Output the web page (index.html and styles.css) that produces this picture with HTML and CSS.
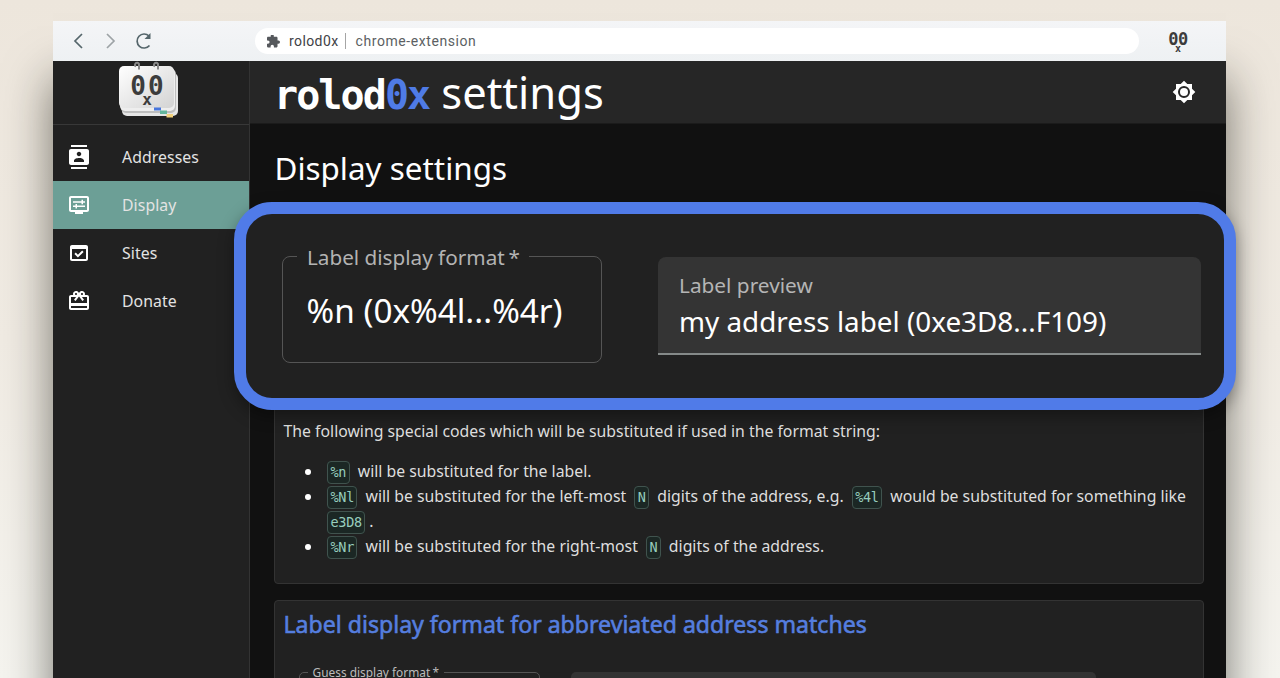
FILE: index.html
```html
<!DOCTYPE html>
<html lang="en">
<head>
<meta charset="utf-8">
<title>rolod0x settings</title>
<link rel="stylesheet" href="styles.css">
</head>
<body>
<div class="window">
  <div class="toolbar">
    <svg class="nav" width="84" height="20" viewBox="0 0 84 20" fill="none" stroke-width="1.7">
      <path d="M11 3 4 10l7 7" stroke="#55666b"/>
      <path d="M36 3l7 7-7 7" stroke="#9da3a6"/>
      <path d="M78.500 14.500A7 7 0 1 1 78 5" stroke="#55666b"/>
      <path d="M79.500 2v6h-6z" fill="#55666b"/>
    </svg>
    <div class="omnibox">
      <svg width="13" height="13" viewBox="2 2 21 21" fill="#55585c"><path d="M20.500 11H19V7c0-1.100-.9-2-2-2h-4V3.500a2.500 2.500 0 0 0-5 0V5H4c-1.100 0-2 .9-2 2v3.800h1.500a2.700 2.700 0 0 1 0 5.400H2V20c0 1.100.9 2 2 2h3.800v-1.500a2.700 2.700 0 0 1 5.400 0V22H17c1.100 0 2-.9 2-2v-4h1.500a2.500 2.500 0 0 0 0-5z"/></svg>
      <span class="ext">rolod0x</span><span class="url">chrome-extension</span>
    </div>
    <div class="face small"><span class="eyes">00</span><span class="mouth">x</span></div>
  </div>
  <div class="app">
    <aside class="sidebar">
      <div class="logo">
        <div class="pad">
          <svg class="cards" width="64" height="60" viewBox="0 0 64 60">
            <defs><linearGradient id="g" x1="0" y1="0" x2="1" y2="1"><stop offset="0" stop-color="#fff"/><stop offset="1" stop-color="#d3d3d3"/></linearGradient></defs>
            <rect x="5" y="12" width="56" height="43" rx="5" fill="#e6e6e6"/>
            <rect x="4" y="8" width="55" height="44" rx="5" fill="#bebebe"/>
            <rect x="3" y="7" width="55" height="43" rx="5" fill="#eee"/>
            <rect x="2" y="5" width="55" height="42" rx="5" fill="url(#g)"/>
            <path d="M37 46.500h7v3h-7z" fill="#4776dd"/><path d="M43 49.500h7v3.500h-7z" fill="#63b69c"/><path d="M49.500 53h6.500v3.500h-6.500z" fill="#f3d27b"/>
            <path d="M19 5.500a2 2 0 1 1 3-1.500V8.500M38 5.500a2 2 0 1 1 3-1.500V8.500" fill="none" stroke="#888" stroke-width="2"/>
          </svg>
          <div class="face big"><span class="eyes">00</span><span class="mouth">x</span></div>
        </div>
      </div>
      <nav class="menu">
        <a class="item"><svg width="24" height="24" viewBox="0 0 24 24"><path d="M20 0H4v2h16V0zM4 24h16v-2H4v2zM20 4H4c-1.100 0-2 .9-2 2v12c0 1.100.9 2 2 2h16c1.100 0 2-.9 2-2V6c0-1.100-.9-2-2-2zm-8 2.750c1.240 0 2.250 1.010 2.250 2.250s-1.010 2.250-2.250 2.250S9.750 10.240 9.750 9 10.760 6.750 12 6.750zM17 17H7v-1.500c0-1.670 3.330-2.500 5-2.500s5 .83 5 2.500V17z"/></svg>Addresses</a>
        <a class="item active"><svg width="24" height="24" viewBox="0 0 24 24"><path fill-rule="evenodd" d="M20 3H4c-1.100 0-2 .9-2 2v12c0 1.100.9 2 2 2h4v2h8v-2h4c1.100 0 2-.9 2-2V5c0-1.100-.9-2-2-2zm0 14H4V5h16v12z"/><path d="M6 8.200h8.500V6.700H16v1.500h2v1.500h-2v1.500h-1.500V9.700H6zM18 14h-8v1.500H8.500V14H6v-1.500h2.500V11H10v1.500h8z"/></svg>Display</a>
        <a class="item"><svg width="24" height="24" viewBox="0 0 24 24"><path d="M16.600 10.880 15.170 9.460l-4.240 4.250-2.120-2.130L7.400 13l3.540 3.540z"/><path d="M19 4H5c-1.110 0-2 .9-2 2v12c0 1.100.89 2 2 2h14c1.100 0 2-.9 2-2V6c0-1.100-.89-2-2-2zm0 14H5V8h14v10z"/></svg>Sites</a>
        <a class="item"><svg width="24" height="24" viewBox="0 0 24 24"><path d="M20 6h-2.180c.11-.31.18-.65.18-1 0-1.660-1.340-3-3-3-1.050 0-1.960.54-2.500 1.350l-.5.67-.5-.68C10.960 2.540 10.050 2 9 2 7.340 2 6 3.340 6 5c0 .35.07.69.18 1H4c-1.110 0-1.990.89-1.990 2L2 19c0 1.110.89 2 2 2h16c1.110 0 2-.89 2-2V8c0-1.110-.89-2-2-2zm-5-2c.55 0 1 .45 1 1s-.45 1-1 1-1-.45-1-1 .45-1 1-1zM9 4c.55 0 1 .45 1 1s-.45 1-1 1-1-.45-1-1 .45-1 1-1zm11 15H4v-2h16v2zm0-5H4V8h5.080L7 10.830 8.620 12 11 8.760l1-1.360 1 1.360L15.380 12 17 10.830 14.920 8H20v6z"/></svg>Donate</a>
      </nav>
    </aside>
    <div class="content">
      <header class="header">
        <h1><span class="brand">rolod<span class="hex">0x</span></span><span class="title">settings</span></h1>
        <svg width="24" height="24" viewBox="0 0 24 24" fill="#fff"><path fill-rule="evenodd" d="M20 8.690V4h-4.690L12 .69 8.690 4H4v4.690L.69 12 4 15.310V20h4.690L12 23.310 15.310 20H20v-4.690L23.310 12 20 8.690zM12 18a6 6 0 1 1 0-12 6 6 0 0 1 0 12z"/><circle cx="12" cy="12" r="4"/></svg>
      </header>
      <main class="main">
        <h2>Display settings</h2>
        <section class="card codes">
          <p>The following special codes which will be substituted if used in the format string:</p>
          <ul>
            <li><code>%n</code> will be substituted for the label.</li>
            <li><code>%Nl</code> will be substituted for the left-most <code>N</code> digits of the address, e.g. <code>%4l</code> would be substituted for something like <code>e3D8</code>.</li>
            <li><code>%Nr</code> will be substituted for the right-most <code>N</code> digits of the address.</li>
          </ul>
        </section>
        <section class="card guess">
          <h3>Label display format for abbreviated address matches</h3>
          <div class="fields">
            <fieldset class="outlined"><legend>Guess display format<i>*</i></legend></fieldset>
            <div class="filled"></div>
          </div>
        </section>
      </main>
    </div>
  </div>
  <div class="callout">
    <fieldset class="outlined"><legend>Label display format<i>*</i></legend><div class="value">%n (0x%4l...%4r)</div></fieldset>
    <div class="filled"><div class="label">Label preview</div><div class="value">my address label (0xe3D8...F109)</div></div>
  </div>
</div>
</body>
</html>
```
FILE: styles.css
```css
* { box-sizing: border-box; }
body {
  margin: 0; height: 678px; overflow: hidden; padding: 21px 54px 0 53px;
  background: linear-gradient(#ede6dc, #f0ebe3 50%, #f5f4ef);
  font-family: "Noto Sans", "Open Sans", sans-serif; font-size: 15.8px; color: #dedede;
}
h1, h2, h3, p, ul { margin: 0; font-weight: 400; }
.window { position: relative; height: 657px; display: flex; flex-direction: column; box-shadow: 0 58px 44px rgba(20, 20, 10, .56); }
.toolbar { flex: none; height: 40px; display: flex; align-items: center; background: linear-gradient(#f4f5f7, #eef1f3); padding-left: 18px; }
.nav { width: 84px; margin-right: 100px; }
.omnibox { width: 884px; height: 26px; border-radius: 13px; background: #fff; display: flex; align-items: center; padding-left: 12px; font: 14px Roboto, sans-serif; color: #3f4246; }
.ext { margin-left: 9px; padding-right: 6px; border-right: 1px solid #a5a5a5; letter-spacing: .4px; }
.url { margin-left: 10px; color: #5c5f63; letter-spacing: .58px; }
.face { display: flex; flex-direction: column; align-items: center; font-family: "DejaVu Sans Mono", monospace; font-weight: 700; color: #3c3c3c; }
.small { margin-left: 28px; width: 22px; }
.small .eyes { font-size: 17px; line-height: 17px; letter-spacing: -.5px; }
.small .mouth { font-size: 10px; line-height: 6px; margin-top: -2px; }
.app { flex: 1; min-height: 0; overflow: hidden; display: flex; background: #111; }
.sidebar { width: 197px; background: #212121; border-right: 1px solid #333; }
.logo { flex: none; height: 64px; border-bottom: 1px solid #383838; display: flex; justify-content: center; }
.pad { position: relative; width: 64px; height: 60px; margin-left: -4px; }
.cards { display: block; }
.big { position: absolute; left: 2px; top: 13px; width: 56px; }
.big .eyes { font-size: 26px; line-height: 25px; letter-spacing: 2px; margin-right: -2px; }
.big .mouth { font-size: 16px; line-height: 8px; margin-top: -3px; }
.menu { padding-top: 8px; }
.item { display: flex; align-items: center; height: 48px; padding-left: 13.500px; color: #e3e3e3; letter-spacing: .08px; }
.item svg { fill: #fff; margin-right: 31.500px; }
.active { background: #6c9f96; }
.content { flex: 1; }
.header { height: 63px; background: #262626; border-bottom: 1px solid #1b1b1b; display: flex; align-items: center; justify-content: space-between; padding: 0 30.500px 0 24px; color: #fff; }
h1 { display: flex; align-items: baseline; line-height: 60px; }
.brand { font: 700 40px "DejaVu Sans Mono", monospace; letter-spacing: -1.9px; }
.hex { color: #4f7be6; }
.title { font-size: 43.500px; margin-left: 12px; }
.main { padding: 23px 22px 0 24px; }
h2 { font-size: 31.400px; line-height: 42px; color: #fff; padding-left: .5px; }
.card { background: #212121; border: 1px solid #333; border-radius: 4px; padding: 0 9px 0 8.500px; }
.codes { margin-top: 31px; height: 364px; padding-top: 198px; }
.codes p { line-height: 25px; }
ul { margin-top: 15px; padding-left: 39.600px; line-height: 25px; }
li::marker { color: #fff; }
code { font: 13.500px/1 "DejaVu Sans Mono", monospace; letter-spacing: -.36px; color: #97cdbd; background: #1b2724; border: 1px solid #40534e; border-radius: 4px; padding: 2px 2.500px 3px; margin: 0 4px; }
.guess { margin-top: 16px; height: 200px; padding-top: 6px; }
h3 { font-size: 23.100px; line-height: 34px; color: #557edf; -webkit-text-stroke: .6px #557edf; }
.outlined { margin: 0; border: 1px solid #555; min-width: 0; }
.outlined i { font-style: normal; margin-left: .18em; }
.guess .fields { display: flex; gap: 31px; margin: 22px 0 0 15px; }
.guess .outlined { width: 241px; height: 70px; border-radius: 5px; padding: 0 8px; }
.guess legend { font-size: 11.900px; line-height: 18px; padding: 0 5px; color: #bcbcbc; }
.guess .filled { width: 525px; height: 70px; margin-top: 9px; background: #333; border-radius: 5px 5px 0 0; }
.callout {
  position: absolute; left: 181px; top: 181px; width: 1002px; height: 208px;
  border: 12px solid #507be8; border-radius: 38px; background: #212121; box-shadow: 0 6px 16px rgba(0, 0, 0, .35);
  display: flex; align-items: flex-start; padding: 28.500px 0 0 36px; gap: 56px;
}
.callout .outlined { width: 320px; height: 120px; border-radius: 8px; padding: 0 14px; }
.callout legend { font-size: 20.700px; line-height: 28px; padding: 0 9px 0 10px; color: #b3b3b3; }
.callout .value { color: #fff; }
.callout .outlined .value { font-size: 33.300px; line-height: 46px; padding: 16px 9.500px 0; white-space: nowrap; }
.callout .filled { width: 543px; height: 98px; margin-top: 14px; padding: 14px 21px; background: #343434; border-radius: 8px 8px 0 0; border-bottom: 2px solid #858a89; }
.callout .label { font-size: 20.800px; line-height: 28px; color: #b5b5b5; }
.callout .filled .value { font-size: 27.850px; line-height: 38px; margin-top: 3px; }
```
